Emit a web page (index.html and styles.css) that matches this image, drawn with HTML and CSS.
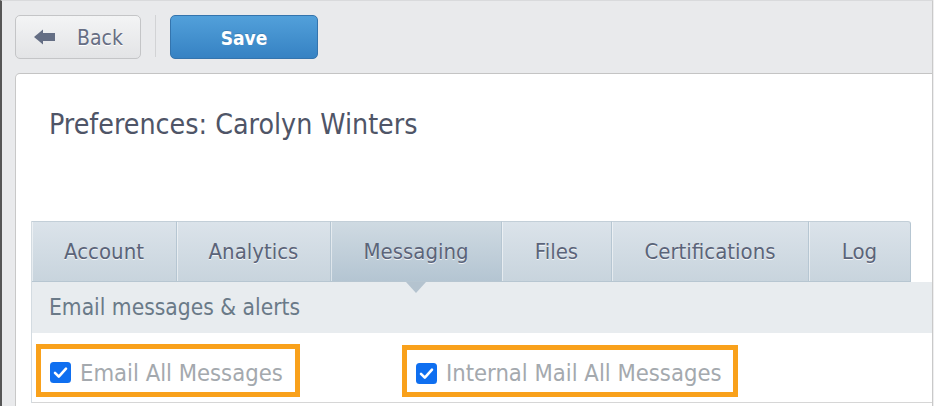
FILE: index.html
```html
<!DOCTYPE html>
<html lang="en">
<head>
<meta charset="utf-8">
<title>Preferences: Carolyn Winters</title>
<link rel="stylesheet" href="styles.css">
</head>
<body>
<div class="frame">
  <div class="toolbar">
    <button class="btn btn-back" type="button">
      <svg class="back-icon" width="21" height="16" viewBox="0 0 21 16" aria-hidden="true">
        <polygon points="0,8 9,0.5 9,15.5" fill="#646e84"/>
        <rect x="8" y="4" width="13" height="8" fill="#646e84"/>
      </svg>
      <span>Back</span>
    </button>
    <span class="divider"></span>
    <button class="btn btn-save" type="button">Save</button>
  </div>
  <div class="panel">
    <h1 class="title">Preferences: Carolyn Winters</h1>
    <div class="tabs-wrap">
      <ul class="tabs">
        <li class="tab tab-account">Account</li>
        <li class="tab tab-analytics">Analytics</li>
        <li class="tab tab-messaging active">Messaging</li>
        <li class="tab tab-files">Files</li>
        <li class="tab tab-cert">Certifications</li>
        <li class="tab tab-log">Log</li>
      </ul>
      <div class="subhead">Email messages &amp; alerts</div>
      <div class="options">
        <label class="opt opt-email">
          <span class="check"><svg width="21" height="21" viewBox="0 0 21 21" aria-hidden="true"><rect width="21" height="21" rx="3.5" fill="#0f6ff0"/><path d="M5 10.8 L8.8 14.6 L16 6.6" fill="none" stroke="#fff" stroke-width="2.6" stroke-linecap="round" stroke-linejoin="round"/></svg></span>
          <span class="opt-text">Email All Messages</span>
        </label>
        <label class="opt opt-internal">
          <span class="check"><svg width="21" height="21" viewBox="0 0 21 21" aria-hidden="true"><rect width="21" height="21" rx="3.5" fill="#0f6ff0"/><path d="M5 10.8 L8.8 14.6 L16 6.6" fill="none" stroke="#fff" stroke-width="2.6" stroke-linecap="round" stroke-linejoin="round"/></svg></span>
          <span class="opt-text">Internal Mail All Messages</span>
        </label>
      </div>
    </div>
  </div>
</div>
</body>
</html>
```

FILE: styles.css
```css
* { box-sizing: border-box; }

html, body {
  margin: 0;
  padding: 0;
  height: 100%;
}

body {
  background: #eeeeef;
  font-family: "DejaVu Sans Condensed", "DejaVu Sans", sans-serif;
  font-stretch: condensed;
  overflow: hidden;
}

.frame {
  width: 933px;
  height: 406px;
  background: #e9eaec;
  border-left: 2px solid #565656;
  border-right: 1px solid #c9c9c9;
  border-top: 1px solid #d9dadc;
  display: flex;
  flex-direction: column;
}

.toolbar {
  display: flex;
  align-items: flex-start;
  padding: 14px 0 0 13px;
  height: 72px;
  flex-shrink: 0;
}

.btn {
  height: 44px;
  border-radius: 5px;
  font-family: inherit;
  font-stretch: condensed;
  cursor: pointer;
  padding: 0;
  display: flex;
  align-items: center;
}

.btn-back {
  width: 126px;
  background: linear-gradient(#f3f4f5, #e3e4e6);
  border: 1px solid #c4c5c7;
  color: #676e84;
  font-size: 21px;
  padding: 2px 0 0 18px;
  gap: 22px;
  text-shadow: 0 1px 0 #fff;
}

.back-icon { display: block; margin-top: -2px; }

.divider {
  width: 1px;
  height: 42px;
  background: #d2d3d5;
  margin: 0 14px 0 14px;
}

.btn-save {
  width: 148px;
  justify-content: center;
  background: linear-gradient(#52a0da, #3682c3);
  border: 1px solid #3474ad;
  color: #fff;
  font-size: 19px;
  font-weight: bold;
  padding-top: 1px;
  text-shadow: 0 -1px 0 rgba(0,0,0,0.15);
}

.panel {
  flex: 1;
  margin-left: 13px;
  background: #fff;
  border-left: 1px solid #c8c8c8;
  border-top: 1px solid #c4c4c4;
  border-top-left-radius: 5px;
  padding-left: 15px;
  display: flex;
  flex-direction: column;
}

.title {
  margin: 34px 0 0 18px;
  font-size: 28.3px;
  line-height: 34px;
  font-weight: normal;
  color: #4f5567;
}

.tabs-wrap {
  margin-top: 79px;
  border-left: 1px solid #d3dbe1;
  display: flex;
  flex-direction: column;
}

.tabs {
  list-style: none;
  margin: 0;
  padding: 0;
  display: flex;
  height: 61px;
}

.tab {
  position: relative;
  height: 61px;
  line-height: 59px;
  text-align: center;
  font-size: 22px;
  color: #5b6479;
  text-shadow: 0 1px 0 rgba(255,255,255,0.8);
  background: linear-gradient(#dbe3ea, #c8d4dd);
  border-top: 1px solid #c3cfd8;
  border-right: 1px solid #b6c6d2;
  border-bottom: 1px solid #b7c6d1;
  box-shadow: inset 1px 0 0 rgba(255,255,255,0.5);
}

.tab-account { width: 145px; }
.tab-analytics { width: 154px; }
.tab-messaging { width: 171px; }
.tab-files { width: 110px; }
.tab-cert { width: 197px; }
.tab-log { width: 102px; border-top-right-radius: 3px; }

.tab.active {
  background: linear-gradient(#cfdae2, #b4c5d2);
}

.tab.active::after {
  content: "";
  position: absolute;
  left: 50%;
  top: 100%;
  margin-left: -10px;
  margin-top: 1px;
  border-top: 11px solid #b4c3cf;
  border-left: 10px solid transparent;
  border-right: 10px solid transparent;
  z-index: 2;
}

.subhead {
  height: 51px;
  line-height: 50px;
  background: #e8ecef;
  padding-left: 17px;
  font-size: 22.6px;
  color: #6a7a88;
}

.options {
  height: 70px;
  display: flex;
  align-items: flex-start;
  gap: 102px;
  padding: 11px 0 0 4px;
  border-bottom: 1px solid #d6d6d6;
}

.opt {
  display: flex;
  align-items: center;
  height: 53px;
  border: 5px solid #f9a11b;
  padding: 4px 0 0 9px;
  gap: 9px;
  font-size: 23.6px;
  color: #a4a9ae;
}

.opt-email { width: 264px; }
.opt-internal { width: 336px; margin-top: 1px; height: 52px; }

.check { display: flex; }
.check svg { display: block; }
```
